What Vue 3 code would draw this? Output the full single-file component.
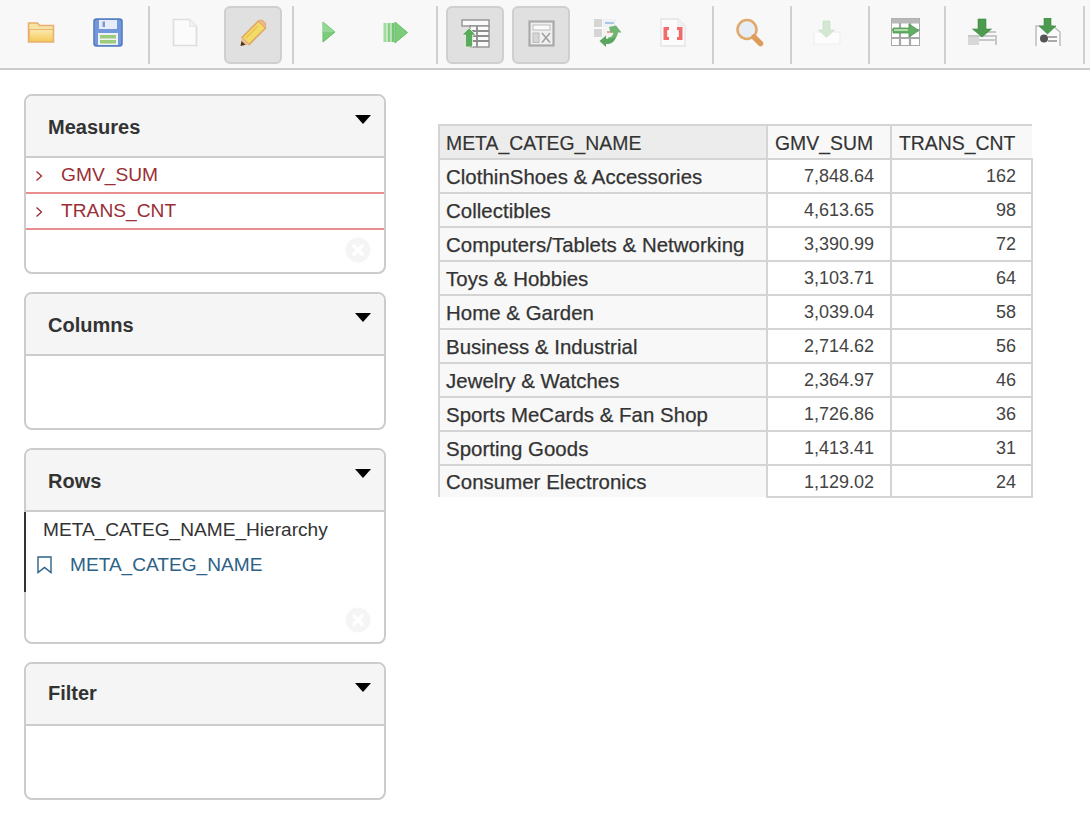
<script setup>
const rows = [
  ['ClothinShoes & Accessories', '7,848.64', '162'],
  ['Collectibles', '4,613.65', '98'],
  ['Computers/Tablets & Networking', '3,390.99', '72'],
  ['Toys & Hobbies', '3,103.71', '64'],
  ['Home & Garden', '3,039.04', '58'],
  ['Business & Industrial', '2,714.62', '56'],
  ['Jewelry & Watches', '2,364.97', '46'],
  ['Sports MeCards & Fan Shop', '1,726.86', '36'],
  ['Sporting Goods', '1,413.41', '31'],
  ['Consumer Electronics', '1,129.02', '24']
]
</script>

<template>
  <div class="page">
    <div class="toolbar">
      <button class="tb" title="Open">
        <svg width="28" height="22" viewBox="0 0 28 22"><defs><linearGradient id="fo" x1="0" y1="0" x2="0" y2="1"><stop offset="0" stop-color="#fbeaae"/><stop offset="1" stop-color="#f4c95c"/></linearGradient></defs><path d="M1.500 2h9l2 2.500h14v16.500h-25z" fill="#f8e3a6" stroke="#e9ae6c" stroke-width="1.500"/><path d="M2.500 8.500h23.500v12h-23.500z" fill="url(#fo)" stroke="#eab56e"/></svg>
      </button>
      <button class="tb btn-second" title="Save">
        <svg width="30" height="29" viewBox="0 0 30 29"><rect x="1" y="1" width="28" height="27" rx="2.500" fill="#7098da" stroke="#5079bd" stroke-width="1.500"/><rect x="6" y="2" width="18" height="9" fill="#e6edf8"/><rect x="9.500" y="3.500" width="2.500" height="5.500" fill="#7b9ad2"/><rect x="5" y="15" width="20" height="12" fill="#eef2f6"/><rect x="7" y="17" width="16" height="3.500" fill="#9ccb7c"/><rect x="7" y="22" width="16" height="3.500" fill="#9ccb7c"/></svg>
      </button>
      <span class="sep mid"></span>
      <button class="tb after-sep" title="New">
        <svg width="26" height="29" viewBox="0 0 26 29"><path d="M1.500 1.500h16l7 7v19h-23z" fill="#fbfbfb" stroke="#dedede" stroke-width="1.700"/><path d="M17.500 1.500v7h7" fill="#f2f2f2" stroke="#e8e8e8"/></svg>
      </button>
      <button class="tb active pencil" title="Edit">
        <svg width="28" height="28" viewBox="0 0 28 28"><path d="M19.500 2l7 7-16.500 16.500-7-7z" fill="#f3db6a" stroke="#e2a867" stroke-width="1.600"/><path d="M19.500 2c2-1.500 4-1 5.500.5s2.500 3.500 1 6.500l-7-7z" fill="#efb48a" stroke="#e2a867"/><path d="M3 18.500l7 7-8.500 1.500z" fill="#e9c08f"/><path d="M1.500 27l1-5 4 3.800z" fill="#4b3520"/><path d="M7 19l12-12" stroke="#e9c24e" stroke-width="1.500"/></svg>
      </button>
      <span class="sep"></span>
      <button class="tb after-sep" title="Run">
        <svg width="14" height="22" viewBox="0 0 14 22"><path d="M1 1l12 10-12 10z" fill="#7ccc7c" stroke="#62bd68"/><path d="M1 1l12 10h-12z" fill="#92d892"/></svg>
      </button>
      <button class="tb" title="Run all">
        <svg width="25" height="23" viewBox="0 0 25 23"><rect x="0.500" y="2" width="3" height="19" fill="#a0dc9c"/><rect x="4.500" y="2" width="3" height="19" fill="#86d084"/><rect x="8.500" y="2" width="3" height="19" fill="#74c476"/><path d="M12 1l12.500 10.500-12.500 10.500z" fill="#7ccc7c" stroke="#66c06a"/></svg>
      </button>
      <span class="sep wide"></span>
      <button class="tb active btn-tight" title="Swap rows">
        <svg width="29" height="29" viewBox="0 0 29 29"><g fill="#fafafa" stroke="#8d8d8d" stroke-width="1.300"><rect x="1" y="1" width="27" height="6"/><rect x="9" y="7" width="19" height="21"/></g><path d="M9 12h19M9 17h19M9 22h19M16 7v21" stroke="#8d8d8d" stroke-width="1.800" fill="none"/><path d="M8 9l7 7h-3.500v12h-7v-12h-3.500z" fill="#5bab5f" stroke="#e8f0e6" stroke-width="0.800"/></svg>
      </button>
      <button class="tb active" title="Hide">
        <svg width="27" height="27" viewBox="0 0 27 27"><rect x="1.500" y="1.500" width="24" height="24" fill="#efefef" stroke="#a9a9a9" stroke-width="2.200"/><rect x="5" y="5" width="17" height="5" fill="#fafafa" stroke="#bbb"/><rect x="5" y="13" width="6" height="9.500" fill="#d6d6d6" stroke="#bbb"/><path d="M14 13l8 9.500M22 13l-8 9.500" stroke="#9f9f9f" stroke-width="1.500"/></svg>
      </button>
      <button class="tb" title="Refresh">
        <svg width="29" height="29" viewBox="0 0 29 29"><rect x="1" y="1" width="8" height="8" fill="#d5d5d5"/><rect x="10" y="1" width="13" height="8" fill="#eef2f7"/><rect x="12" y="4" width="9" height="2" fill="#a8c6e6"/><rect x="1" y="11" width="8" height="8" fill="#d5d5d5"/><rect x="10" y="11" width="13" height="8" fill="#f3f3f3"/><rect x="14" y="13" width="7" height="2" fill="#eea0a0"/><path d="M16 9l7-1.500 5.500 7h-3.500c-.5 5-4.500 8.500-10 8.500v-3.500c3 0 5-1.500 5.500-5h-3z" fill="#6fb672"/><path d="M13 29l-6.500-6 6.500-5.500v3c4 .5 7 0 10-2-1 5-5 8-10 7.500z" fill="#5aa560"/></svg>
      </button>
      <button class="tb" title="MDX">
        <svg width="26" height="29" viewBox="0 0 26 29"><path d="M1 1h17l7 7v20h-24z" fill="#fbfbfb" stroke="#e3e3e3" stroke-width="1.300"/><path d="M18 1v7h7" fill="#f1f1f1" stroke="#e8e8e8"/><path d="M9 9h-5.500v13h5.500v-3h-1.800v-7h1.800zM17 9h5.500v13h-5.500v-3h1.800v-7h-1.800z" fill="#f26b6b"/></svg>
      </button>
      <span class="sep"></span>
      <button class="tb after-sep" title="Zoom">
        <svg width="29" height="29" viewBox="0 0 29 29"><circle cx="12" cy="11.500" r="9.500" fill="#e7edf5" stroke="#e2a867" stroke-width="2.500"/><path d="M19 19l6.500 6.500" stroke="#dd9c5c" stroke-width="5.500" stroke-linecap="round"/></svg>
      </button>
      <span class="sep wide"></span>
      <button class="tb after-sep" title="Drill">
        <svg width="28" height="25" viewBox="0 0 28 25"><rect x="1" y="12" width="26" height="12" fill="#fdfdfd" stroke="#ededed"/><path d="M10 1h7v9h4.500l-8 7.500-8-7.500h4.500z" fill="#d3e7d2" stroke="#c5dec4" stroke-width="0.600"/></svg>
      </button>
      <span class="sep wide"></span>
      <button class="tb after-sep" title="Export table">
        <svg width="29" height="28" viewBox="0 0 29 28"><rect x="0.500" y="0.500" width="28" height="27" fill="#fff" stroke="#a8a8a8"/><rect x="0.500" y="0.500" width="28" height="5" fill="#b9b9b9"/><path d="M0.500 12h28M0.500 20h28M9 5v23M19 5v23" stroke="#a8a8a8" stroke-width="2.200"/><path d="M2 10h16v-4l10 6.500-10 6.500v-4h-16z" fill="#63ad64" stroke="#4f9851" stroke-width="0.800"/><rect x="3" y="11" width="14" height="2" fill="#b2dba9"/></svg>
      </button>
      <span class="sep"></span>
      <button class="tb btn-after-narrow" title="Export left">
        <svg width="30" height="28" viewBox="0 0 30 28"><rect x="1" y="18" width="11" height="9" fill="#d8d8d8"/><path d="M1 18h28v9M12 14h17M12 22h17" stroke="#c8c8c8" stroke-width="2" fill="none"/><path d="M11 1h8v10h5.500l-9.500 8-9.500-8h5.500z" fill="#4d9b4e" stroke="#3d8a42" stroke-width="0.600"/></svg>
      </button>
      <button class="tb" title="Export right">
        <svg width="26" height="28" viewBox="0 0 26 28"><path d="M1 28v-20h17l7 6v14" fill="#fbfbfb" stroke="#bdbdbd" stroke-width="1.500"/><circle cx="9" cy="20.500" r="4" fill="#555"/><path d="M13 19h9M13 23h9" stroke="#8e8e8e" stroke-width="1.500"/><path d="M9 0h7v8h5l-8.500 8-8.500-8h5z" fill="#4d9b4e" stroke="#3d8a42" stroke-width="0.600"/></svg>
      </button>
      <span class="sep end"></span>
    </div>

    <div class="content">
      <aside class="side">
        <section class="panel p-measures">
          <header class="head"><span>Measures</span><i class="caret"></i></header>
          <div class="body">
            <div class="measure"><svg class="chev" width="8" height="12" viewBox="0 0 8 12"><path d="M1.500 1.500l5 4.500-5 4.500" fill="none" stroke="#9a2f36" stroke-width="1.300"/></svg>GMV_SUM</div>
            <div class="measure"><svg class="chev" width="8" height="12" viewBox="0 0 8 12"><path d="M1.500 1.500l5 4.500-5 4.500" fill="none" stroke="#9a2f36" stroke-width="1.300"/></svg>TRANS_CNT</div>
            <span class="clear"><svg width="26" height="26" viewBox="0 0 26 26"><circle cx="13" cy="13" r="12.500" fill="#f5f5f5"/><path d="M9 9l8 8M17 9l-8 8" stroke="#fff" stroke-width="3.500" stroke-linecap="round"/></svg></span>
          </div>
        </section>

        <section class="panel p-columns">
          <header class="head"><span>Columns</span><i class="caret"></i></header>
          <div class="body"></div>
        </section>

        <section class="panel p-rows">
          <header class="head"><span>Rows</span><i class="caret"></i></header>
          <div class="body">
            <div class="hier">
              <div class="hier-name">META_CATEG_NAME_Hierarchy</div>
              <div class="level"><svg width="15" height="18" viewBox="0 0 15 18"><path d="M1 1h13v15.500l-6.500-5-6.500 5z" fill="none" stroke="#2c6287" stroke-width="1.400"/></svg>META_CATEG_NAME</div>
            </div>
            <span class="clear"><svg width="26" height="26" viewBox="0 0 26 26"><circle cx="13" cy="13" r="12.500" fill="#f5f5f5"/><path d="M9 9l8 8M17 9l-8 8" stroke="#fff" stroke-width="3.500" stroke-linecap="round"/></svg></span>
          </div>
        </section>

        <section class="panel p-filter">
          <header class="head"><span>Filter</span><i class="caret"></i></header>
          <div class="body"></div>
        </section>
      </aside>

      <main class="main">
        <table class="grid">
          <thead>
            <tr>
              <th class="c1">META_CATEG_NAME</th>
              <th class="c2">GMV_SUM</th>
              <th class="c3">TRANS_CNT</th>
            </tr>
          </thead>
          <tbody>
            <tr v-for="r in rows" :key="r[0]">
              <th class="c1">{{ r[0] }}</th>
              <td class="c2">{{ r[1] }}</td>
              <td class="c3">{{ r[2] }}</td>
            </tr>
          </tbody>
        </table>
      </main>
    </div>
  </div>
</template>

<style>
html, body { margin: 0; background: #fff; }
</style>

<style scoped>
.page {
  width: 1090px;
  height: 836px;
  overflow: hidden;
  font-family: "Liberation Sans", Arial, sans-serif;
  color: #333;
  background: #fff;
}
.toolbar {
  display: flex;
  align-items: center;
  height: 68px;
  padding-left: 12px;
  gap: 8px;
  background: #f8f8f8;
  border-bottom: 2px solid #ccc;
}
.tb {
  flex: none;
  width: 58px;
  height: 58px;
  padding: 0 0 5px;
  margin: 1px 0 0;
  display: flex;
  align-items: center;
  justify-content: center;
  border: 2px solid transparent;
  border-radius: 6px;
  background: transparent;
  box-sizing: border-box;
}
.tb svg { filter: blur(0.4px); }
.tb.active { background: #e0e0e0; border-color: #cfcfcf; padding-bottom: 3px; }
.tb.btn-second { margin-left: 1px; }
.tb.after-sep { margin-left: -2px; }
.tb.pencil { margin-left: 2px; }
.tb.btn-tight { margin-left: 0; }
.tb.btn-after-narrow { margin-left: -1px; }
.sep {
  flex: none;
  width: 2px;
  height: 58px;
  margin: 1px 0 0 2px;
  background: #d0d0d0;
}
.sep.mid { margin-left: 3px; }
.sep.wide { margin-left: 4px; }
.sep.end { margin-left: -2px; }
.content {
  display: flex;
  align-items: flex-start;
}
.side {
  width: 362px;
  margin: 24px 0 0 24px;
  display: flex;
  flex-direction: column;
  gap: 18px;
  flex: none;
}
.panel {
  border: 2px solid #ccc;
  border-radius: 8px;
  box-sizing: border-box;
  display: flex;
  flex-direction: column;
}
.p-measures { height: 180px; }
.p-columns { height: 138px; }
.p-rows { height: 196px; }
.p-filter { height: 138px; }
.head {
  flex: none;
  height: 62px;
  box-sizing: border-box;
  background: #f5f5f5;
  border-bottom: 2px solid #ccc;
  border-radius: 6px 6px 0 0;
  padding: 2px 0 0 22px;
  display: flex;
  align-items: center;
  justify-content: space-between;
  font-size: 20px;
  font-weight: 700;
  color: #333;
}
.p-filter .head span { margin-top: -4px; }
.caret {
  width: 0;
  height: 0;
  margin: -16px 13px 0 0;
  border-left: 8px solid transparent;
  border-right: 8px solid transparent;
  border-top: 9px solid #000;
}
.body { position: relative; flex: 1; }
.measure {
  height: 36px;
  box-sizing: border-box;
  border-bottom: 2px solid #e98e8e;
  display: flex;
  align-items: center;
  padding: 0 0 0 9px;
  gap: 18px;
  font-size: 19.2px;
  color: #9a2f36;
}
.measure:first-child { padding-bottom: 1px; }
.chev { margin-top: 2px; }
.clear { position: absolute; right: 13px; bottom: 9px; height: 26px; }
.hier {
  border-left: 2px solid #333;
  height: 80px;
  margin-left: -2px;
  font-size: 19.1px;
}
.hier-name { padding: 6px 0 0 17px; height: 35px; box-sizing: border-box; line-height: 24px; color: #333; }
.level {
  display: flex;
  align-items: center;
  gap: 18px;
  padding-left: 11px;
  height: 35px;
  color: #2c6287;
}
.main { flex: 1; padding: 54px 0 0 52px; }
.grid {
  border-collapse: collapse;
  table-layout: fixed;
  width: 594px;
  font-size: 18px;
}
.grid th, .grid td {
  height: 34px;
  box-sizing: border-box;
  padding: 0 6px;
  border: 2px solid #d4d4d4;
}
.grid th {
  text-align: left;
  font-weight: 400;
  background: #f8f8f8;
  color: #333;
}
.grid thead th { font-size: 19.4px; padding-top: 2px; -webkit-text-stroke: 0.15px #333; }
.grid thead th.c1 { background: #ececec; }
.grid thead th.c2, .grid thead th.c3 { padding-left: 7px; }
.grid thead th.c3 { border-right: 0; }
.grid tbody th {
  font-size: 20.4px;
  letter-spacing: 0.05px;
  -webkit-text-stroke: 0.25px #333;
  padding-top: 2px;
}
.grid td { text-align: right; padding-right: 16px; color: #444; background: #fff; }
.grid td.c3 { padding-right: 15px; }
.grid .c1 { width: 328px; }
.grid .c2 { width: 124px; }
.grid .c3 { width: 141px; }
.grid tbody tr:last-child th, .grid tbody tr:last-child td { height: 32px; padding-top: 2px; }
.grid tbody tr:last-child th { border-bottom: 0; }
</style>
